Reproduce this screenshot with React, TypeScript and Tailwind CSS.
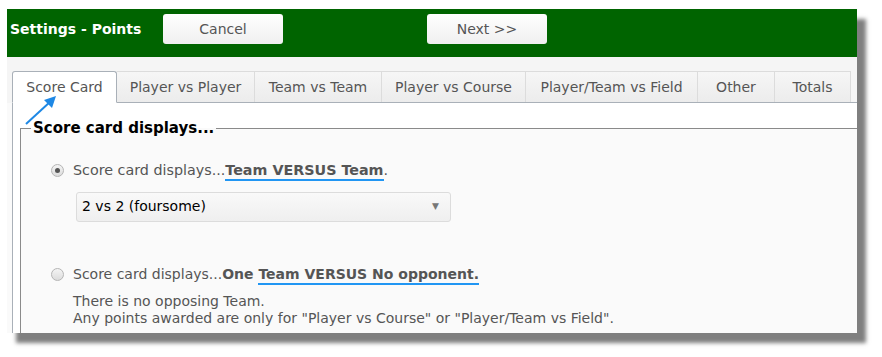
const tabs = [
  { label: 'Score Card', w: 'w-[105px]' },
  { label: 'Player vs Player', w: 'w-[138px]' },
  { label: 'Team vs Team', w: 'w-[127px]' },
  { label: 'Player vs Course', w: 'w-[144px]' },
  { label: 'Player/Team vs Field', w: 'w-[172px]' },
  { label: 'Other', w: 'w-[77px]' },
  { label: 'Totals', w: 'w-[76px]' },
];

function Radio({ checked }: { checked?: boolean }) {
  return (
    <span className="w-[13px] h-[13px] rounded-full border border-[#b5b5b5] bg-gradient-to-b from-[#f4f4f4] to-[#dcdcdc] flex items-center justify-center shrink-0">
      {checked && <span className="w-[5px] h-[5px] rounded-full bg-[#555]" />}
    </span>
  );
}

export default function App() {
  return (
    <div className="w-[882px] h-[357px] bg-white pt-[9px] pl-[7px] font-['DejaVu_Sans',sans-serif]">
      <div className="relative w-[850px] h-[324px] bg-[#fafafa] shadow-[9px_10px_4px_rgba(0,0,0,0.5)]">
        <div className="w-full h-full overflow-hidden">
          {/* header */}
          <div className="h-[48px] bg-[#006400] flex items-start pt-[5px]">
            <span className="ml-[3px] w-[153px] h-[30px] flex items-center text-white font-bold text-[14px]">Settings - Points</span>
            <button className="w-[120px] h-[30px] rounded-[3px] bg-gradient-to-b from-white to-[#f0f0f0] text-[#555] text-[14px]">
              Cancel
            </button>
            <button className="ml-[144px] w-[120px] h-[30px] rounded-[3px] bg-gradient-to-b from-white to-[#f0f0f0] text-[#555] text-[14px]">
              Next &gt;&gt;
            </button>
          </div>

          {/* tabs */}
          <div className="bg-[#f5f5f5] pt-[14px] pl-[5px]">
            <div className="flex border-b border-[#a9b0b8] h-[32px]">
              {tabs.map((t, i) => (
                <div
                  key={t.label}
                  className={
                    i === 0
                      ? `${t.w} h-[32px] -mb-px bg-white border border-[#a9b0b8] border-b-white rounded-t-[3px] flex items-center justify-center text-[14px] text-[#555]`
                      : `${t.w} h-[31px] bg-gradient-to-b from-[#f6f6f6] to-[#ececec] border border-l-0 border-[#dcdcdc] border-b-0 flex items-center justify-center text-[14px] text-[#555]`
                  }
                >
                  {t.label}
                </div>
              ))}
            </div>
          </div>

          {/* content */}
          <div className="ml-[5px] border-l border-[#a9b0b8] bg-white pt-[14px] pl-[7px] h-full">
            <fieldset className="border-t border-l border-[#8a8a8a] bg-[#fafafa] h-full">
              <legend className="ml-[10px] px-[2px] text-[15px] font-bold text-black">Score card displays...</legend>

              <div className="pl-[30px] pt-[20px]">
                <label className="flex items-center gap-[9px] text-[14.3px] text-[#555]">
                  <Radio checked />
                  <span>
                    Score card displays...
                    <span className="font-bold border-b-2 border-[#2196f3] pb-[1px]">Team VERSUS Team</span>.
                  </span>
                </label>

                <div className="mt-[11px] ml-[25px] w-[375px] h-[30px] border border-[#dcdcdc] rounded-[3px] bg-gradient-to-b from-[#f9f9f9] to-[#efefef] flex items-center justify-between px-[5px] text-[14px] text-black">
                  <span>2 vs 2 (foursome)</span>
                  <span className="text-[9px] text-[#777] mr-[6px]">▼</span>
                </div>

                <label className="mt-[42px] flex items-center gap-[9px] text-[14px] text-[#555]">
                  <Radio />
                  <span>
                    Score card displays...<span className="font-bold">One </span>
                    <span className="font-bold border-b-2 border-[#2196f3] pb-[1px]">Team VERSUS No opponent.</span>
                  </span>
                </label>

                <div className="mt-[8px] ml-[22px] text-[14px] text-[#555] leading-[17px]">
                  <div>There is no opposing Team.</div>
                  <div>Any points awarded are only for "Player vs Course" or "Player/Team vs Field".</div>
                </div>
              </div>
            </fieldset>
          </div>
        </div>

        {/* annotation arrow */}
        <svg className="absolute left-[15px] top-[84px]" width="40" height="38" viewBox="0 0 40 38">
          <line x1="4" y1="31" x2="29" y2="8" stroke="#1e88e5" strokeWidth="2" />
          <polygon points="34,3 22,7 30,15" fill="#1e88e5" />
        </svg>
      </div>
    </div>
  );
}
